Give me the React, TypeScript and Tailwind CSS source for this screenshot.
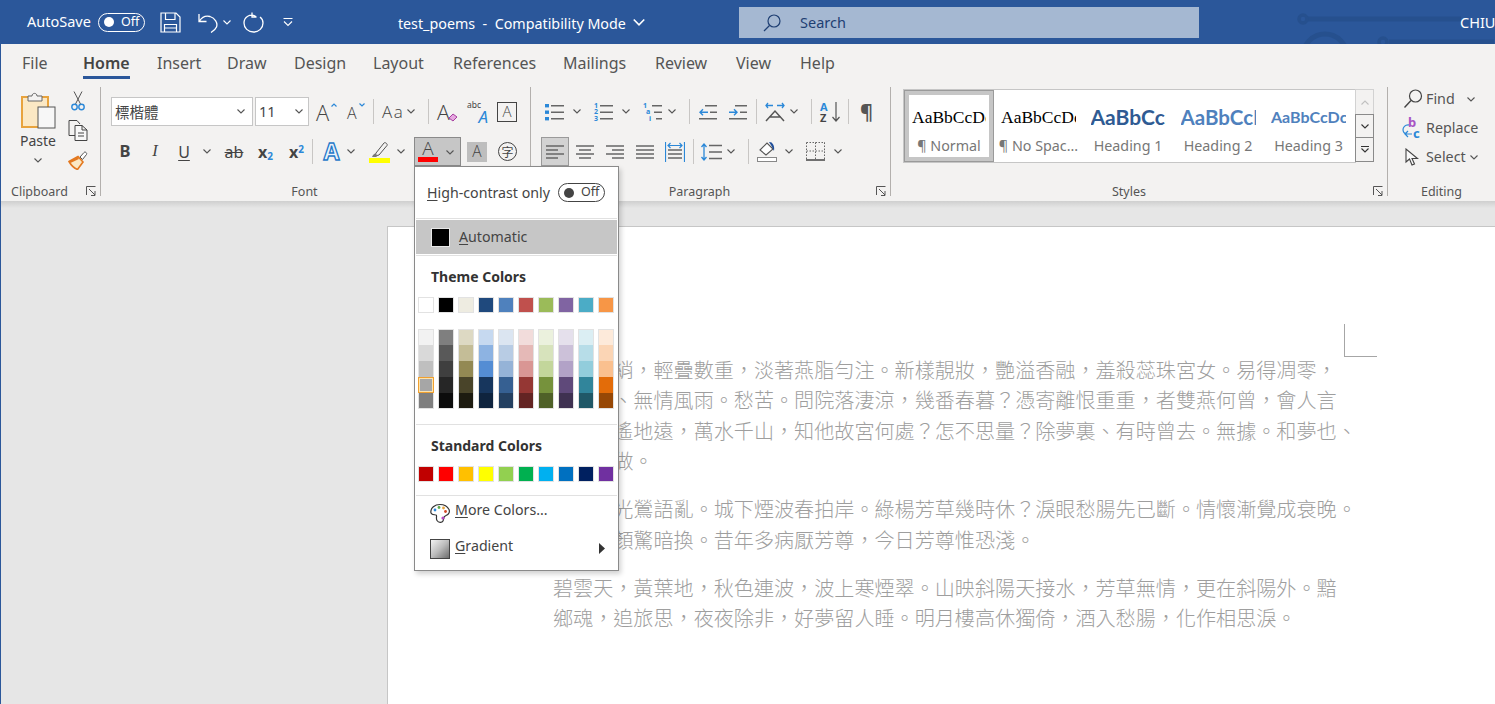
import React from 'react';

const B = '#2b88d8';

const Icon: React.FC<{ w: number; h: number; className?: string; children: React.ReactNode }> = ({ w, h, className, children }) => (
  <svg width={w} height={h} viewBox={`0 0 ${w} ${h}`} fill="none" className={`block shrink-0 ${className ?? ''}`}>
    {children}
  </svg>
);

const Chev: React.FC<{ className?: string; color?: string }> = ({ className, color = '#555' }) => (
  <Icon w={8} h={5} className={className}>
    <path d="M0.5 0.5L4 4L7.5 0.5" stroke={color} strokeWidth="1.1" />
  </Icon>
);

const Sep: React.FC<{ className?: string }> = ({ className }) => <div className={`w-px h-[25px] bg-[#c8c6c4] shrink-0 ${className ?? ''}`} />;

const Launcher = () => (
  <Icon w={10} h={10} className="absolute right-[4px] bottom-[0px]">
    <path d="M0.5 9V0.5H9.5M3 3L9 9M9 5V9.5H5" stroke="#555" strokeWidth="1" />
  </Icon>
);

const Toggle: React.FC<{ dark?: boolean }> = ({ dark }) => (
  <div className={`w-[47px] h-[19px] rounded-full border flex items-center pl-[5px] gap-[7px] text-[12.5px] ${dark ? 'border-[#444] text-[#444]' : 'border-white text-white'}`}>
    <div className={`w-[10px] h-[10px] rounded-full ${dark ? 'bg-[#444]' : 'bg-white'}`} />
    <span className="leading-none">Off</span>
  </div>
);

const Lines: React.FC<{ x1: number[]; x2: number[]; ys: number[]; w: number; h: number }> = ({ x1, x2, ys, w, h }) => (
  <Icon w={w} h={h}>
    {ys.map((y, i) => (
      <path key={y} d={`M${x1[i]} ${y}H${x2[i]}`} stroke="#666" strokeWidth="1.5" />
    ))}
  </Icon>
);

const tabs = [
  { t: 'File', c: 'w-[61px] ml-[21px]' },
  { t: 'Home', c: 'w-[47px] font-semibold border-b-[3px] border-[#2b579a] text-[#444]' },
  { t: 'Insert', c: 'w-[70px] ml-[27px]' },
  { t: 'Draw', c: 'w-[67px]' },
  { t: 'Design', c: 'w-[79px]' },
  { t: 'Layout', c: 'w-[80px]' },
  { t: 'References', c: 'w-[110px]' },
  { t: 'Mailings', c: 'w-[92px]' },
  { t: 'Review', c: 'w-[81px]' },
  { t: 'View', c: 'w-[64px]' },
  { t: 'Help', c: 'w-[40px]' },
];

const themeTop = ['bg-[#ffffff]', 'bg-[#000000]', 'bg-[#eeece1]', 'bg-[#1f497d]', 'bg-[#4f81bd]', 'bg-[#c0504d]', 'bg-[#9bbb59]', 'bg-[#8064a2]', 'bg-[#4bacc6]', 'bg-[#f79646]'];
const standard = ['bg-[#c00000]', 'bg-[#ff0000]', 'bg-[#ffc000]', 'bg-[#ffff00]', 'bg-[#92d050]', 'bg-[#00b050]', 'bg-[#00b0f0]', 'bg-[#0070c0]', 'bg-[#002060]', 'bg-[#7030a0]'];
const shades = [
  ['bg-[#f2f2f2]', 'bg-[#d9d9d9]', 'bg-[#bfbfbf]', 'bg-[#a6a6a6]', 'bg-[#7f7f7f]'],
  ['bg-[#7f7f7f]', 'bg-[#595959]', 'bg-[#3f3f3f]', 'bg-[#262626]', 'bg-[#0c0c0c]'],
  ['bg-[#ddd9c3]', 'bg-[#c4bd97]', 'bg-[#938953]', 'bg-[#494429]', 'bg-[#1d1b10]'],
  ['bg-[#c6d9f0]', 'bg-[#8db3e2]', 'bg-[#548dd4]', 'bg-[#17365d]', 'bg-[#0f243e]'],
  ['bg-[#dbe5f1]', 'bg-[#b8cce4]', 'bg-[#95b3d7]', 'bg-[#366092]', 'bg-[#244061]'],
  ['bg-[#f2dcdb]', 'bg-[#e5b9b7]', 'bg-[#d99694]', 'bg-[#953734]', 'bg-[#632423]'],
  ['bg-[#ebf1dd]', 'bg-[#d7e3bc]', 'bg-[#c3d69b]', 'bg-[#76923c]', 'bg-[#4f6128]'],
  ['bg-[#e5e0ec]', 'bg-[#ccc1d9]', 'bg-[#b2a2c7]', 'bg-[#5f497a]', 'bg-[#3f3151]'],
  ['bg-[#dbeef3]', 'bg-[#b7dde8]', 'bg-[#92cddc]', 'bg-[#31859b]', 'bg-[#205867]'],
  ['bg-[#fdeada]', 'bg-[#fbd5b5]', 'bg-[#fac08f]', 'bg-[#e36c09]', 'bg-[#974806]'],
];

const poems = [
  ['裁剪冰綃，輕疊數重，淡著燕脂勻注。新樣靚妝，艷溢香融，羞殺蕊珠宮女。易得凋零，', '更多少、無情風雨。愁苦。問院落淒涼，幾番春暮？憑寄離恨重重，者雙燕何曾，會人言', '語。天遙地遠，萬水千山，知他故宮何處？怎不思量？除夢裏、有時曾去。無據。和夢也、', '新來不做。'],
  ['城上風光鶯語亂。城下煙波春拍岸。綠楊芳草幾時休？淚眼愁腸先已斷。情懷漸覺成衰晚。', '鸞鏡朱顏驚暗換。昔年多病厭芳尊，今日芳尊惟恐淺。'],
  ['碧雲天，黃葉地，秋色連波，波上寒煙翠。山映斜陽天接水，芳草無情，更在斜陽外。黯', '鄉魂，追旅思，夜夜除非，好夢留人睡。明月樓高休獨倚，酒入愁腸，化作相思淚。'],
];

const styleItems = [
  { name: '¶ No Spac...', sample: 'AaBbCcDc', c: "font-['Liberation_Serif',serif] text-[17.5px] text-black", w: 'w-[89px]' },
  { name: 'Heading 1', sample: 'AaBbCcDc', c: "font-['Lato',sans-serif] font-bold text-[21px] text-[#2f5b93]", w: 'w-[90px]' },
  { name: 'Heading 2', sample: 'AaBbCcDc', c: "font-['Lato',sans-serif] font-bold text-[20.5px] text-[#4f81bd]", w: 'w-[90px]' },
  { name: 'Heading 3', sample: 'AaBbCcDc', c: "font-['Lato',sans-serif] font-bold text-[16px] text-[#4f81bd]", w: 'w-[91px]' },
];

const Menu = () => (
  <div className="absolute left-[413px] top-[166px] w-[205px] h-[405px] bg-white border border-[#8a8a8a] shadow-[2px_3px_5px_rgba(0,0,0,0.18)] text-[14.2px] text-[#444] z-10">
    <div className="h-[51px] flex items-center justify-between pl-[12px] pr-[13px]">
      <span><u className="underline-offset-2">H</u>igh-contrast only</span>
      <Toggle dark />
    </div>
    <div className="h-px mx-px bg-[#e1e1e1]" />
    <div className="mt-px mx-px h-[34px] bg-[#c6c6c6] flex items-center pl-[15px]">
      <div className="w-[19px] h-[19px] bg-black border border-[#e8e8e8]" />
      <span className="ml-[9px]"><u className="underline-offset-2">A</u>utomatic</span>
    </div>
    <div className="h-px mt-px mx-px bg-[#e1e1e1]" />
    <div className="h-[41px] flex items-center pl-[16px] font-bold text-[14px] text-[#333]">Theme Colors</div>
    <div className="flex gap-[4px] pl-[3px]">
      {themeTop.map(c => (
        <div key={c} className="w-[16px] h-[16px] border border-[#e2e2e2]"><div className={`w-full h-full ${c}`} /></div>
      ))}
    </div>
    <div className="flex gap-[4px] pl-[3px] mt-[16px]">
      {shades.map((col, i) => (
        <div key={col[0] + i} className="w-[16px] border-x border-[#e2e2e2]">
          {col.map((c, j) => (
            <div
              key={c}
              className={`h-[16px] ${c} ${j === 0 ? 'border-t border-[#e2e2e2]' : ''} ${j === 4 ? 'border-b border-[#e2e2e2]' : ''} ${i === 0 && j === 3 ? '-mx-px border border-[#f0a030] shadow-[inset_0_0_0_1px_#fbe3ae]' : ''}`}
            />
          ))}
        </div>
      ))}
    </div>
    <div className="h-px mx-px mt-[15px] bg-[#e1e1e1]" />
    <div className="h-[41px] flex items-center pl-[16px] font-bold text-[14px] text-[#333]">Standard Colors</div>
    <div className="flex gap-[4px] pl-[3px]">
      {standard.map(c => (
        <div key={c} className="w-[16px] h-[16px] border border-[#e2e2e2]"><div className={`w-full h-full ${c}`} /></div>
      ))}
    </div>
    <div className="h-px mx-px mt-[13px] bg-[#e1e1e1]" />
    <div className="h-[35px] flex items-center pl-[15px]">
      <Icon w={21} h={21}>
        <path d="M10 1.5C4.5 1.5 0.8 5 0.8 9C0.8 12 4 11.5 6 12C7.5 12.5 5.5 15 7 17.5C8.5 20 12 20 13 18C14 16 13 13.5 16 12.5C19 11.5 20 9 19 6.5C17.5 3.5 14 1.5 10 1.5Z" stroke="#333" strokeWidth="1.2" fill="#fff" />
        <circle cx="5" cy="7" r="1.4" fill="#2b88d8" />
        <circle cx="9" cy="4.5" r="1.4" fill="#5aa84b" />
        <circle cx="13.5" cy="5" r="1.4" fill="#e8a33d" />
        <circle cx="15.5" cy="8.5" r="1.4" fill="#d24726" />
        <circle cx="13" cy="15" r="1.6" fill="#b24ac0" />
      </Icon>
      <span className="ml-[4px] pb-[7px]"><u className="underline-offset-2">M</u>ore Colors...</span>
    </div>
    <div className="h-[35px] flex items-center pl-[15px]">
      <div className="w-[20px] h-[20px] border border-[#444] bg-linear-to-br from-[#f4f4f4] via-[#bcbcbc] to-[#6e6e6e]" />
      <span className="ml-[5px] pb-[5px]"><u className="underline-offset-2">G</u>radient</span>
      <Icon w={6} h={11} className="ml-[86px]">
        <path d="M0 0L6 5.5L0 11Z" fill="#333" />
      </Icon>
    </div>
  </div>
);

const TitleBar = () => (
  <div className="relative h-[44px] bg-[#2b579a] flex items-center text-white shrink-0 overflow-hidden">
    <span className="ml-[26px] text-[14.5px]">AutoSave</span>
    <div className="ml-[7px]"><Toggle /></div>
    <Icon w={21} h={21} className="ml-[15px]">
      <path d="M1 1H16L20 5V20H1ZM5.5 1V7.5H15V1M4.5 20V12.5H16.5V20M4.5 16H16.5" stroke="#fff" strokeWidth="1.2" />
    </Icon>
    <Icon w={21} h={21} className="ml-[17px]">
      <path d="M1 2V9.5H8.5M1.5 9C4 5 8 3.5 12 4.5C17 6 20 11 18.5 15C17.5 17.5 15.5 19 13 20.5" stroke="#fff" strokeWidth="1.3" />
    </Icon>
    <Chev className="ml-[4px]" color="#fff" />
    <Icon w={21} h={22} className="ml-[12px]">
      <path d="M9 1.5V6H13.5M13 5.5C7 2 1 6 1 12C1 17 5 21 10.5 21C16 21 20 17 20 12C20 9.5 19 7.5 17 6" stroke="#fff" strokeWidth="1.3" />
    </Icon>
    <Icon w={10} h={9} className="ml-[19px]">
      <path d="M0.5 0.5H9.5M1 3.5L5 7.5L9 3.5" stroke="#fff" strokeWidth="1.1" />
    </Icon>
    <span className="ml-[105px] pt-[3px] text-[14.3px] whitespace-pre">test_poems  -  Compatibility Mode</span>
    <Chev className="ml-[9px] scale-150" color="#fff" />
    <div className="absolute left-[738px] top-[7px] w-[460px] h-[31px] bg-[#a5b8d2] flex items-center text-[#1f3f73]">
      <Icon w={18} h={18} className="ml-[24px]">
        <circle cx="11" cy="7" r="6" stroke="#1f3f73" strokeWidth="1.2" />
        <path d="M6.5 11.5L1 17" stroke="#1f3f73" strokeWidth="1.3" />
      </Icon>
      <span className="ml-[19px] text-[14.5px]">Search</span>
    </div>
    <Icon w={198} h={44} className="absolute left-[1295px] top-0">
      <g stroke="#26508e" strokeWidth="5">
        <path d="M12 19H165" />
        <circle cx="7" cy="19" r="4" strokeWidth="3.5" />
        <circle cx="29" cy="56" r="22" />
        <path d="M93 42H198" />
        <circle cx="87" cy="42" r="4" strokeWidth="3.5" />
      </g>
    </Icon>
    <span className="absolute left-[1459px] top-[12px] text-[14.5px] whitespace-nowrap">CHIU</span>
  </div>
);

const Tabs = () => (
  <div className="h-[38px] bg-[#f3f2f1] flex items-start pt-[7px] text-[16px] text-[#555] shrink-0">
    {tabs.map(t => (
      <div key={t.t} className={`h-[28px] leading-[24px] shrink-0 whitespace-nowrap ${t.c}`}>{t.t}</div>
    ))}
  </div>
);

const Clipboard = () => (
  <div className="w-[100px] h-[109px] mt-[5px] relative flex flex-col border-r border-[#b3b0ad] shrink-0">
    <div className="flex">
      <div className="ml-[19px] w-[36px] flex flex-col items-center pt-[4px]">
        <Icon w={36} h={38}>
          <rect x="2" y="6" width="26" height="30" fill="#fbe8c4" stroke="#e8a33d" strokeWidth="2" />
          <path d="M8 10V5H12C12 1.5 17 1.5 17 5H22V10Z" fill="#f3f2f1" stroke="#666" strokeWidth="1" />
          <rect x="18" y="16" width="17" height="21" fill="#f7f7f7" stroke="#555" strokeWidth="1" />
        </Icon>
        <span className="text-[14px] text-[#444] mt-[2px] leading-[20px]">Paste</span>
        <Chev className="mt-[7px]" />
      </div>
      <div className="ml-[12px] flex flex-col items-center w-[20px] pt-[4px]">
        <Icon w={14} h={20}>
          <path d="M3 0.5L9.5 13M11 0.5L4.5 13" stroke="#555" strokeWidth="1" />
          <circle cx="3.5" cy="16" r="2.7" stroke={B} strokeWidth="1.4" />
          <circle cx="10.5" cy="16" r="2.7" stroke={B} strokeWidth="1.4" />
        </Icon>
        <Icon w={20} h={21} className="mt-[9px]">
          <path d="M8 15.5H1V0.5H9L12 4" stroke="#444" strokeWidth="1" />
          <path d="M7 5.5H14L19 10V20.5H7ZM14 5.5V10H19M10 13H16M10 16H16" stroke="#444" strokeWidth="1" fill="#f8f8f8" />
        </Icon>
        <Icon w={20} h={20} className="mt-[9px]">
          <path d="M12 7L16 2.5C17 1.2 19.5 3 18.5 4.5L14.5 9.5Z" fill="#fff" stroke="#555" strokeWidth="1" />
          <path d="M1 11.5L10 6.5L15 12L9.5 19.5C7 18.5 3 15 1 11.5Z" fill="#fbe8c4" stroke="#e3781f" strokeWidth="1.6" />
          <path d="M2 12L10.5 8" stroke="#e3781f" strokeWidth="2" />
        </Icon>
      </div>
    </div>
    <div className="mt-auto mb-[-1px] h-[10px] leading-[10px] text-[12.5px] text-[#555] pl-[10px]">Clipboard</div>
    <Launcher />
  </div>
);

const FontGroup = () => (
  <div className="w-[430px] h-[109px] mt-[5px] relative flex flex-col border-r border-[#b3b0ad] shrink-0 text-[#444]">
    <div className="flex items-center h-[29px] mt-[10px]">
      <div className="ml-[10px] w-[142px] h-[29px] bg-white border border-[#c6c6c6] flex items-center justify-between pl-[3px] pr-[7px] text-[14.5px]">
        <span className="font-['Noto_Sans_CJK_TC',sans-serif]">標楷體</span>
        <Chev />
      </div>
      <div className="ml-[2px] w-[54px] h-[29px] bg-white border border-[#c6c6c6] flex items-center justify-between pl-[3px] pr-[5px] text-[14.5px]">
        <span>11</span>
        <Chev />
      </div>
      <div className="ml-[7px] w-[21px] h-[24px] relative font-['Open_Sans',sans-serif] font-light text-[22px] leading-[24px]">
        A
        <Icon w={6} h={4} className="absolute right-0 top-[3px]"><path d="M0.5 3.5L3 1L5.5 3.5" stroke={B} strokeWidth="1.2" /></Icon>
      </div>
      <div className="ml-[10px] w-[18px] h-[24px] relative font-['Open_Sans',sans-serif] font-light text-[16px] leading-[27px]">
        A
        <Icon w={6} h={4} className="absolute right-0 top-[3px]"><path d="M0.5 0.5L3 3L5.5 0.5" stroke={B} strokeWidth="1.2" /></Icon>
      </div>
      <Sep className="ml-[8px]" />
      <div className="ml-[8px] w-[23px] text-[17px] tracking-[1.5px] font-['Open_Sans',sans-serif] font-light whitespace-nowrap">Aa</div>
      <Chev className="ml-[2px]" />
      <Sep className="ml-[13px]" />
      <div className="ml-[8px] w-[20px] h-[24px] relative font-['Open_Sans',sans-serif] font-light text-[21px] leading-[24px]">
        A
        <Icon w={10} h={9} className="absolute right-[-1px] bottom-[2px]"><path d="M1 5L5 1L9 4L5 8Z" fill="#e6a8e0" stroke="#a63da0" strokeWidth="1" /></Icon>
      </div>
      <div className="ml-[10px] w-[21px] h-[24px] flex flex-col">
        <span className="text-[8.5px] leading-[9px] h-[9px]">abc</span>
        <span className="text-[17px] italic leading-[15px] h-[15px] text-right text-[#2b88d8]">A</span>
      </div>
      <div className="ml-[9px] w-[20px] h-[20px] border border-[#444] flex items-center justify-center text-[15px] leading-none font-['Open_Sans',sans-serif] font-light">A</div>
    </div>
    <div className="flex items-center h-[29px] mt-[11px]">
      <div className="ml-[18px] w-[12px] text-center text-[16.5px] font-bold">B</div>
      <div className="ml-[19px] w-[10px] text-center text-[16.5px] italic font-['Liberation_Serif',serif]">I</div>
      <div className="ml-[18px] w-[12px] text-center text-[16px] underline underline-offset-2">U</div>
      <Chev className="ml-[13px]" />
      <div className="ml-[13px] w-[20px] text-center text-[16px] line-through leading-none">ab</div>
      <div className="ml-[14px] w-[15px] text-[16px] font-bold leading-none">x<sub className="text-[10px] text-[#2b88d8] font-bold">2</sub></div>
      <div className="ml-[16px] w-[15px] text-[16px] font-bold leading-none">x<sup className="text-[10px] text-[#2b88d8] font-bold">2</sup></div>
      <Sep className="ml-[8px]" />
      <div className="ml-[9px] w-[19px] text-center text-[23px] font-bold leading-none text-[#eaf3fb] [-webkit-text-stroke:1.3px_#1f79c9]">A</div>
      <Chev className="ml-[6px]" />
      <div className="ml-[14px] w-[21px] h-[24px] relative">
        <Icon w={21} h={24}>
          <path d="M7 13L15 3C16 1.8 19 4 18 5.5L10 15L6 16Z" fill="#f3f2f1" stroke="#555" strokeWidth="1" />
          <path d="M4 15L6 13.5L9 15.5L7 17H3Z" fill="#777" />
          <rect x="0" y="18" width="21" height="5" fill="#ffff00" />
        </Icon>
      </div>
      <Chev className="ml-[7px]" />
      <div className="ml-[9px] w-[47px] h-[29px] bg-[#c6c6c6] border border-[#8a8a8a] flex items-start">
        <div className="ml-[3px] w-[20px] flex flex-col items-center">
          <span className="font-['Open_Sans',sans-serif] font-light text-[19px] leading-[18px] mt-px">A</span>
          <div className="w-[20px] h-[5px] bg-[#ff0000]" />
        </div>
        <Chev className="ml-[8px] mt-[12px]" />
      </div>
      <div className="ml-[6px] w-[20px] h-[20px] bg-[#bebebe] flex items-center justify-center text-[15.5px] font-['Open_Sans',sans-serif] font-light">A</div>
      <div className="ml-[11px] w-[19px] h-[19px] rounded-full border border-[#444] flex items-center justify-center text-[12px] leading-none font-['Noto_Sans_CJK_TC',sans-serif]">字</div>
    </div>
    <div className="mt-auto mb-[-1px] h-[10px] leading-[10px] text-[12.5px] text-[#555] text-center pr-[22px]">Font</div>
  </div>
);

const ParagraphGroup = () => (
  <div className="w-[360px] h-[109px] mt-[5px] relative flex flex-col border-r border-[#b3b0ad] shrink-0">
    <div className="flex items-center h-[29px] mt-[10px]">
      <Icon w={19} h={18} className="ml-[14px]">
        <rect x="0" y="1" width="4" height="3.4" fill={B} /><rect x="0" y="7.5" width="4" height="3.4" fill={B} /><rect x="0" y="14" width="4" height="3.4" fill={B} />
        <path d="M6 2.7H19M6 9.2H19M6 15.7H19" stroke="#666" strokeWidth="1.5" />
      </Icon>
      <Chev className="ml-[9px]" />
      <div className="ml-[13px] flex w-[19px] h-[18px]">
        <span className="text-[7px] font-bold text-[#2b88d8] leading-[6.5px] flex flex-col w-[6px] shrink-0"><span>1</span><span>2</span><span>3</span></span>
        <Icon w={13} h={18}><path d="M0 2.7H13M0 9.2H13M0 15.7H13" stroke="#666" strokeWidth="1.5" /></Icon>
      </div>
      <Chev className="ml-[9px]" />
      <div className="ml-[13px] flex w-[19px] h-[18px]">
        <span className="text-[7px] font-bold text-[#2b88d8] leading-[6.5px] flex flex-col w-[9px] shrink-0"><span>1</span><span className="pl-[3px]">a</span><span className="pl-[6px]">i</span></span>
        <Icon w={10} h={18}><path d="M0 2.7H10M2 9.2H10M4 15.7H10" stroke="#666" strokeWidth="1.5" /></Icon>
      </div>
      <Chev className="ml-[6px]" />
      <Sep className="ml-[13px]" />
      <Icon w={18} h={18} className="ml-[9px]">
        <path d="M6 2.7H18M11 9.2H18M0 15.7H18" stroke="#666" strokeWidth="1.5" />
        <path d="M9 9.2H1M4 6.2L1 9.2L4 12.2" stroke={B} strokeWidth="1.4" />
      </Icon>
      <Icon w={18} h={18} className="ml-[12px]">
        <path d="M6 2.7H18M11 9.2H18M0 15.7H18" stroke="#666" strokeWidth="1.5" />
        <path d="M0 9.2H8M5 6.2L8 9.2L5 12.2" stroke={B} strokeWidth="1.4" />
      </Icon>
      <Sep className="ml-[9px]" />
      <Icon w={20} h={20} className="ml-[8px]">
        <path d="M1 19L10 9L19 19M4 15H16" stroke="#555" strokeWidth="1.5" />
        <path d="M1 3.5H8M3 1L1 3.5L3 6M12 3.5H19M17 1L19 3.5L17 6" stroke={B} strokeWidth="1.3" />
      </Icon>
      <Chev className="ml-[5px]" />
      <Sep className="ml-[13px]" />
      <div className="ml-[8px] w-[20px] h-[22px] flex">
        <div className="w-[12px] flex flex-col text-[11px] font-bold leading-[11px]">
          <span className="text-[#2b88d8]">A</span>
          <span className="text-[#444]">Z</span>
        </div>
        <Icon w={8} h={20} className="mt-[1px]"><path d="M4 0V19M0.5 15L4 19L7.5 15" stroke="#555" strokeWidth="1.2" /></Icon>
      </div>
      <Sep className="ml-[8px]" />
      <span className="ml-[11px] text-[20px] font-bold text-[#555] leading-none">¶</span>
    </div>
    <div className="flex items-center h-[29px] mt-[11px]">
      <div className="ml-[10px] w-[28px] h-[29px] bg-[#d2d2d2] border border-[#9a9a9a] flex items-center justify-center">
        <Lines w={18} h={16} x1={[0, 0, 0, 0]} x2={[18, 12, 18, 12]} ys={[2, 6, 10, 14]} />
      </div>
      <div className="ml-[7px]"><Lines w={18} h={16} x1={[0, 3, 0, 3]} x2={[18, 15, 18, 15]} ys={[2, 6, 10, 14]} /></div>
      <div className="ml-[12px]"><Lines w={18} h={16} x1={[0, 6, 0, 6]} x2={[18, 18, 18, 18]} ys={[2, 6, 10, 14]} /></div>
      <div className="ml-[12px]"><Lines w={18} h={16} x1={[0, 0, 0, 0]} x2={[18, 18, 18, 18]} ys={[2, 6, 10, 14]} /></div>
      <Icon w={20} h={20} className="ml-[11px]">
        <path d="M3 8H17M3 12H17M3 16H17" stroke="#666" strokeWidth="1.4" />
        <path d="M0.5 0V20M19.5 0V20M3 3.5H17M5.5 1L3 3.5L5.5 6M14.5 1L17 3.5L14.5 6" stroke={B} strokeWidth="1.2" />
      </Icon>
      <Sep className="ml-[8px]" />
      <Icon w={21} h={18} className="ml-[7px]">
        <path d="M8 2.5H21M8 9H21M8 15.5H21" stroke="#666" strokeWidth="1.5" />
        <path d="M3 1V17M0.5 4L3 1L5.5 4M0.5 14L3 17L5.5 14" stroke={B} strokeWidth="1.3" />
      </Icon>
      <Chev className="ml-[5px]" />
      <Sep className="ml-[13px]" />
      <Icon w={20} h={21} className="ml-[8px]">
        <path d="M3 9L10 2L16 8L9 14Z" fill="#fff" stroke="#555" strokeWidth="1.1" />
        <path d="M12 1C15 0.5 18 4 17 10L14.5 5Z" fill="#1f4e9a" />
        <rect x="0.5" y="16.5" width="19" height="4" fill="#fff" stroke="#888" />
      </Icon>
      <Chev className="ml-[8px]" />
      <Icon w={19} h={19} className="ml-[13px]">
        <path d="M0.5 0.5H19M0.5 0.5V18M18.5 0.5V18M9.5 0.5V18M0.5 9H19" stroke="#666" strokeWidth="1" strokeDasharray="1.5 1.5" />
        <path d="M0 18H19" stroke="#444" strokeWidth="1.5" />
      </Icon>
      <Chev className="ml-[9px]" />
    </div>
    <div className="mt-auto mb-[-1px] h-[10px] leading-[10px] text-[12.5px] text-[#555] text-center pr-[22px]">Paragraph</div>
    <Launcher />
  </div>
);

const StylesGroup = () => (
  <div className="w-[497px] h-[109px] mt-[5px] relative flex flex-col border-r border-[#b3b0ad] shrink-0">
    <div className="flex ml-[12px] mt-[2px]">
      <div className="w-[453px] h-[74px] bg-white border border-[#c6c6c6] flex">
        <div className="w-[90px] h-[72px] border border-[#9a9a9a] p-[4px] shrink-0 bg-[#c6c6c6]">
          <div className="w-full h-full bg-white flex flex-col items-center">
            <div className="w-[74px] mt-[10px] h-[24px] overflow-hidden whitespace-nowrap font-['Liberation_Serif',serif] text-[17.5px] leading-[24px] text-black">AaBbCcDc</div>
            <div className="mt-[7px] text-[14.3px] text-[#777] leading-[20px] whitespace-nowrap">¶ Normal</div>
          </div>
        </div>
        {styleItems.map(s => (
          <div key={s.name} className={`${s.w} h-[72px] flex flex-col items-center shrink-0`}>
            <div className={`w-[75px] mt-[15px] h-[24px] overflow-hidden whitespace-nowrap leading-[24px] ${s.c}`}>{s.sample}</div>
            <div className="mt-[7px] text-[14.3px] text-[#777] leading-[20px] whitespace-nowrap">{s.name}</div>
          </div>
        ))}
      </div>
      <div className="w-[19px] h-[74px] flex flex-col -ml-px">
        <div className="h-[26px] border border-[#d2d2d2] flex items-center justify-center"><Chev className="rotate-180" color="#c0c0c0" /></div>
        <div className="h-[24px] border border-[#8a8a8a] -mt-px flex items-center justify-center"><Chev color="#333" /></div>
        <div className="h-[25px] border border-[#8a8a8a] -mt-px flex flex-col items-center justify-center gap-[1px]">
          <div className="w-[8px] h-px bg-[#333]" />
          <Chev color="#333" />
        </div>
      </div>
    </div>
    <div className="mt-auto mb-[-1px] h-[10px] leading-[10px] text-[12.5px] text-[#555] text-center pr-[20px]">Styles</div>
    <Launcher />
  </div>
);

const EditingGroup = () => (
  <div className="w-[107px] h-[109px] mt-[5px] flex flex-col shrink-0 text-[14.3px] text-[#555]">
    <div className="h-[24px] flex items-center">
      <Icon w={20} h={20} className="ml-[15px]">
        <circle cx="12.5" cy="7" r="6" stroke="#444" strokeWidth="1.2" />
        <path d="M8 11.5L1.5 18.5" stroke="#444" strokeWidth="1.4" />
      </Icon>
      <span className="ml-[3px]">Find</span>
      <Chev className="ml-[12px]" />
    </div>
    <div className="h-[24px] mt-[5px] flex items-center">
      <div className="w-[20px] h-[22px] ml-[14px] flex">
        <Icon w={11} h={14} className="mt-[7px]"><path d="M7 1C3 0.5 0.8 3.5 1 6C1.2 8.5 3 10 6 10M10 10H3.5M6 7L3 10L6 13" stroke={B} strokeWidth="1.2" /></Icon>
        <div className="flex flex-col font-bold leading-[10px]">
          <span className="text-[13px] text-[#a855c4] -ml-[5px]">b</span>
          <span className="text-[13px] text-[#2b88d8] mt-px">c</span>
        </div>
      </div>
      <span className="ml-[4px]">Replace</span>
    </div>
    <div className="h-[24px] mt-[5px] flex items-center">
      <Icon w={14} h={18} className="ml-[17px]">
        <path d="M1 1V14L4.5 11L7 17L9.5 16L7 10.5H12.5Z" stroke="#444" strokeWidth="1.1" fill="#f8f8f8" />
      </Icon>
      <span className="ml-[7px]">Select</span>
      <Chev className="ml-[4px]" />
    </div>
    <div className="mt-auto mb-[-1px] h-[10px] leading-[10px] text-[12.5px] text-[#555] text-center">Editing</div>
  </div>
);

const Page = () => (
  <div className="flex-1 bg-[#e6e6e6] overflow-hidden">
    <div className="h-[7px] bg-linear-to-b from-[#cfcfcf] to-[#e6e6e6]" />
    <div lang="zh-Hant" className="relative ml-[386px] mt-[18px] h-[600px] bg-white border-l border-t border-[#c6c6c6] pl-[165px] pt-[128px] font-['Noto_Sans_CJK_TC','Noto_Sans_CJK_SC',sans-serif] font-light text-[20.1px] leading-[30.4px] text-[#9e9e9e]">
      <div className="absolute left-[956px] top-[97px] w-[33px] h-[33px] border-l border-b border-[#a6a6a6]" />
      {poems.map(p => (
        <div key={p[0]} className="mb-[17.6px]">
          {p.map(line => (
            <div key={line} className="whitespace-nowrap">{line}</div>
          ))}
        </div>
      ))}
    </div>
  </div>
);

export default function App() {
  return (
    <div className="relative h-screen w-full overflow-hidden border-l border-[#2b579a] flex flex-col font-['Noto_Sans','Noto_Sans_CJK_TC',sans-serif] bg-[#e6e6e6]">
      <TitleBar />
      <Tabs />
      <div className="h-[119px] bg-[#f3f2f1] flex shrink-0">
        <Clipboard />
        <FontGroup />
        <ParagraphGroup />
        <StylesGroup />
        <EditingGroup />
      </div>
      <Page />
      <Menu />
    </div>
  );
}
